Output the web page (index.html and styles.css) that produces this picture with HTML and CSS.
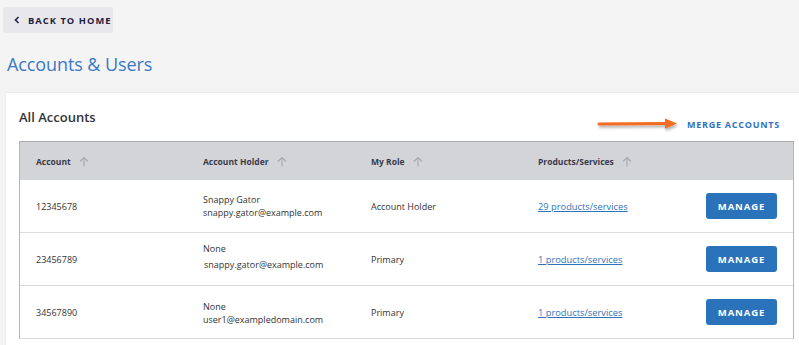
FILE: index.html
```html
<!DOCTYPE html>
<html>
<head>
<meta charset="utf-8">
<link rel="stylesheet" href="styles.css">
</head>
<body>
<div class="page">
  <a class="back-btn" href="#">
    <svg class="chev" width="6" height="8" viewBox="0 0 6 8"><path d="M4.5 1 L1.5 4 L4.5 7" fill="none" stroke="#1f2244" stroke-width="1.6"/></svg>
    <span>BACK TO HOME</span>
  </a>
  <h1 class="title">Accounts &amp; Users</h1>
  <div class="card">
    <div class="card-head">
      <h2 class="card-title">All Accounts</h2>
      <div class="merge">
        <svg class="arrow" width="86" height="18" viewBox="0 0 86 18">
          <defs>
            <filter id="sh" x="-10%" y="-50%" width="120%" height="200%">
              <feDropShadow dx="1" dy="2" stdDeviation="1.4" flood-color="#000" flood-opacity="0.35"/>
            </filter>
          </defs>
          <g filter="url(#sh)">
            <path d="M3 8 L72 7.6" stroke="#f36c21" stroke-width="3" stroke-linecap="round" fill="none"/>
            <path d="M69 2.4 L81 7.6 L69 12.8 Z" fill="#f36c21"/>
          </g>
        </svg>
        <a class="merge-link" href="#">MERGE ACCOUNTS</a>
      </div>
    </div>
    <div class="table">
      <div class="row head">
        <div class="cell">Account <svg class="sort" width="10" height="11" viewBox="0 0 10 11"><path d="M5 10.5 V1.5 M1 5.5 L5 1.5 L9 5.5" fill="none" stroke="#a9abb1" stroke-width="1.2"/></svg></div>
        <div class="cell">Account Holder <svg class="sort" width="10" height="11" viewBox="0 0 10 11"><path d="M5 10.5 V1.5 M1 5.5 L5 1.5 L9 5.5" fill="none" stroke="#a9abb1" stroke-width="1.2"/></svg></div>
        <div class="cell">My Role <svg class="sort" width="10" height="11" viewBox="0 0 10 11"><path d="M5 10.5 V1.5 M1 5.5 L5 1.5 L9 5.5" fill="none" stroke="#a9abb1" stroke-width="1.2"/></svg></div>
        <div class="cell">Products/Services <svg class="sort" width="10" height="11" viewBox="0 0 10 11"><path d="M5 10.5 V1.5 M1 5.5 L5 1.5 L9 5.5" fill="none" stroke="#a9abb1" stroke-width="1.2"/></svg></div>
        <div class="cell"></div>
      </div>
      <div class="row">
        <div class="cell">12345678</div>
        <div class="cell stack"><span>Snappy Gator</span><span>snappy.gator@example.com</span></div>
        <div class="cell">Account Holder</div>
        <div class="cell"><a class="plink" href="#">29 products/services</a></div>
        <div class="cell"><button class="manage">MANAGE</button></div>
      </div>
      <div class="row">
        <div class="cell">23456789</div>
        <div class="cell stack lifted"><span>None</span><span class="gap">snappy.gator@example.com</span></div>
        <div class="cell">Primary</div>
        <div class="cell"><a class="plink" href="#">1 products/services</a></div>
        <div class="cell"><button class="manage">MANAGE</button></div>
      </div>
      <div class="row">
        <div class="cell">34567890</div>
        <div class="cell stack lowered"><span>None</span><span>user1@exampledomain.com</span></div>
        <div class="cell">Primary</div>
        <div class="cell"><a class="plink" href="#">1 products/services</a></div>
        <div class="cell"><button class="manage">MANAGE</button></div>
      </div>
    </div>
  </div>
</div>
</body>
</html>
```
FILE: styles.css
```css
html, body {
  margin: 0;
  padding: 0;
  background: #f4f4f4;
  font-family: "Open Sans", "Liberation Sans", sans-serif;
  overflow: hidden;
}
.page {
  padding-top: 7px;
  width: 799px;
  height: 345px;
  overflow: hidden;
}
.back-btn {
  margin-left: 3px;
  display: flex;
  align-items: center;
  width: 110px;
  height: 26px;
  box-sizing: border-box;
  padding-left: 11px;
  background: #e8e8ec;
  border-radius: 3px;
  text-decoration: none;
  color: #1f2244;
  font-size: 9.3px;
  font-weight: 700;
  letter-spacing: 1.05px;
  white-space: nowrap;
}
.chev { margin-right: 8px; }
.title {
  margin: 17px 0 0 7px;
  font-size: 18px;
  font-weight: 400;
  color: #3a79c4;
  line-height: 28px;
  letter-spacing: -0.1px;
}
.card {
  margin: 15px 0 0 6px;
  background: #fff;
  padding: 12px 5px 0 13px;
  box-shadow: 0 0 2px rgba(0,0,0,0.08);
  height: 260px;
}
.card-head {
  display: flex;
  justify-content: space-between;
  align-items: flex-start;
  height: 36px;
}
.card-title {
  margin: 0;
  font-size: 13px;
  font-weight: 600;
  color: #333;
  line-height: 24px;
}
.merge {
  display: flex;
  align-items: center;
  margin-top: 9px;
  margin-right: 14px;
}
.arrow { margin-right: 5px; margin-top: 2px; }
.merge-link {
  color: #2f73bb;
  font-size: 9px;
  font-weight: 700;
  letter-spacing: 0.75px;
  text-decoration: none;
}
.table {
  border-left: 1px solid #b5b6ba;
  border-right: 1px solid #b5b6ba;
}
.row {
  display: grid;
  grid-template-columns: 167px 168px 167px 168px 1fr;
  height: 53px;
  border-bottom: 1px solid #dcdcdc;
  box-sizing: border-box;
  font-size: 9px;
  color: #333;
}
.row.head {
  height: 39px;
  background: #d3d4d8;
  border-top: 1px solid #a8a9ad;
  border-bottom: none;
  font-weight: 700;
  font-size: 8.5px;
  color: #3a3a4a;
}
.cell {
  display: flex;
  align-items: center;
  padding-left: 16px;
}
.sort { margin-left: 8px; }
.stack {
  flex-direction: column;
  align-items: flex-start;
  justify-content: center;
  line-height: 13px;
}
.stack.lifted { padding-bottom: 5px; }
.stack.lowered { padding-top: 2px; }
.stack .gap { margin-top: 3px; margin-left: 1px; }
.plink {
  color: #2f73bb;
  text-decoration: underline;
  font-size: 9.3px;
}
.manage {
  width: 71px;
  height: 26px;
  background: #2a73ba;
  color: #fff;
  border: none;
  border-radius: 3px;
  font-family: "Open Sans", "Liberation Sans", sans-serif;
  font-size: 9.5px;
  font-weight: 700;
  letter-spacing: 0.9px;
  padding: 0;
}
```
